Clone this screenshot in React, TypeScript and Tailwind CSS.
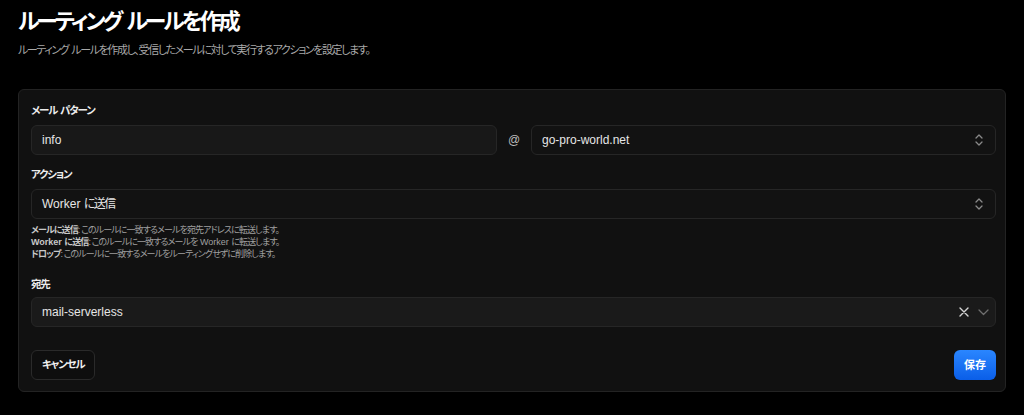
import React from "react";

const font = { fontFamily: '"Liberation Sans", "Noto Sans CJK JP", "Noto Sans", sans-serif' };

function UpDown() {
  return (
    <svg width="10" height="14" viewBox="0 0 10 14" fill="none" stroke="#8a8a8a" strokeWidth="1.3" strokeLinecap="round" strokeLinejoin="round">
      <path d="M2 5 L5 2 L8 5" />
      <path d="M2 9 L5 12 L8 9" />
    </svg>
  );
}

// Latin words and spaces keep their natural spacing inside tightly tracked kana text
function N({ children }: { children: React.ReactNode }) {
  return <span className="tracking-normal">{children}</span>;
}

function Label({ children }: { children: React.ReactNode }) {
  return <div className="text-[10.5px] leading-[16px] font-bold tracking-[-1.2px] text-[#ececec]">{children}</div>;
}

export default function App() {
  return (
    <div className="min-h-[415px] w-full bg-black text-white [font-feature-settings:'palt']" style={font}>
      <div className="px-[18px] pt-[6px]">
        <h1 className="text-[22px] leading-[32px] font-bold tracking-[-3px] text-white">
          ルーティング<N> </N>ルールを作成
        </h1>
        <p className="mt-[4px] text-[11px] leading-[16px] tracking-[-1.4px] text-[#a8a8a8]">
          ルーティング<N> </N>ルールを作成し、受信したメールに対して実行するアクションを設定します。
        </p>

        <div className="mt-[31px] w-[988px] rounded-[6px] border border-[#232323] bg-[#111111] pl-[12px] pr-[9px] pt-[12px] pb-[11px]">
          <Label>
            メール<N> </N>パターン
          </Label>
          <div className="mt-[7px] flex items-center">
            <div className="flex h-[30px] w-[466px] items-center rounded-[6px] border border-[#262626] bg-[#181818] px-[10px] text-[12px] text-[#e6e6e6]">
              info
            </div>
            <div className="w-[34px] text-center text-[12px] text-[#bdbdbd]">@</div>
            <div className="flex h-[30px] flex-1 items-center justify-between rounded-[6px] border border-[#262626] bg-[#121212] pl-[10px] pr-[11px] text-[12px] text-[#e6e6e6]">
              <span>go-pro-world.net</span>
              <UpDown />
            </div>
          </div>

          <div className="mt-[11px]">
            <Label>アクション</Label>
          </div>
          <div className="mt-[7px] flex h-[30px] items-center justify-between rounded-[6px] border border-[#262626] bg-[#121212] pl-[10px] pr-[11px] text-[12px] text-[#e6e6e6]">
            <span>
              Worker <span className="tracking-[-1.5px]">に送信</span>
            </span>
            <UpDown />
          </div>
          <div className="mt-[5px] text-[9px] leading-[12px] tracking-[-0.9px] text-[#a0a0a0]">
            <div>
              <span className="font-bold text-[#c8c8c8]">メールに送信</span>: このルールに一致するメールを宛先アドレスに転送します。
            </div>
            <div>
              <span className="font-bold text-[#c8c8c8]">
                <N>Worker </N>に送信
              </span>
              : このルールに一致するメールを<N> Worker </N>に転送します。
            </div>
            <div>
              <span className="font-bold text-[#c8c8c8]">ドロップ</span>: このルールに一致するメールをルーティングせずに削除します。
            </div>
          </div>

          <div className="mt-[16px]">
            <Label>宛先</Label>
          </div>
          <div className="mt-[5px] flex h-[30px] items-center justify-between rounded-[6px] border border-[#262626] bg-[#1a1a1a] pl-[10px] pr-[6px] text-[12px] text-[#e6e6e6]">
            <span>mail-serverless</span>
            <div className="flex items-center gap-[9px]">
              <svg width="10" height="10" viewBox="0 0 10 10" stroke="#d4d4d4" strokeWidth="1.4" strokeLinecap="round">
                <path d="M1 1 L9 9 M9 1 L1 9" />
              </svg>
              <svg width="11" height="7" viewBox="0 0 11 7" fill="none" stroke="#6e6e6e" strokeWidth="1.3" strokeLinecap="round" strokeLinejoin="round">
                <path d="M1 1 L5.5 5.5 L10 1" />
              </svg>
            </div>
          </div>

          <div className="mt-[23px] flex items-center justify-between">
            <button className="flex h-[30px] items-center rounded-[6px] border border-[#2a2a2a] bg-[#0e0e0e] px-[10px] text-[10.5px] font-bold tracking-[-1.2px] text-[#f0f0f0]">
              キャンセル
            </button>
            <button className="flex h-[30px] items-center rounded-[6px] bg-gradient-to-b from-[#2a86ff] to-[#0a5ee8] px-[10px] text-[11px] font-bold text-white">
              保存
            </button>
          </div>
        </div>
      </div>
    </div>
  );
}
